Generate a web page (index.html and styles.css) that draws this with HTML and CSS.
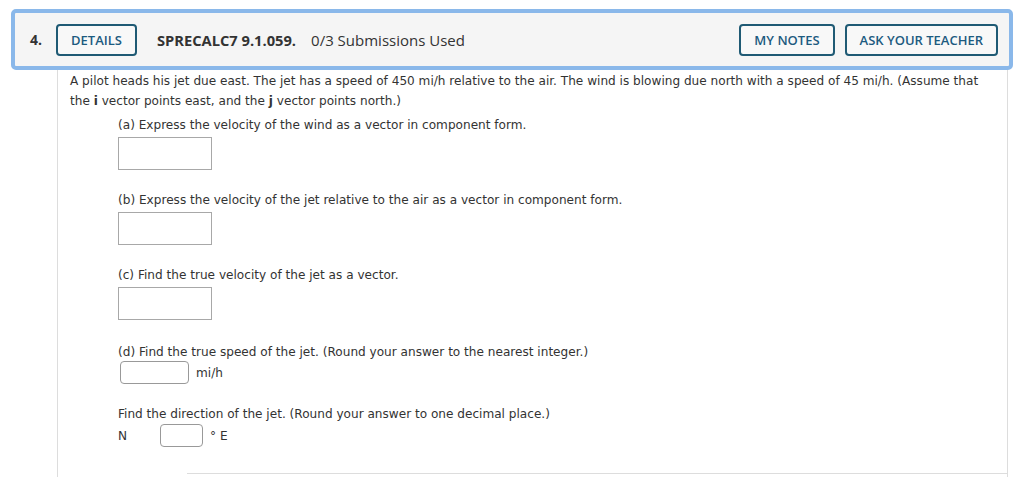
FILE: index.html
```html
<!DOCTYPE html>
<html>
<head>
<meta charset="utf-8">
<link rel="stylesheet" href="styles.css">
</head>
<body>
<div class="qhead">
  <span class="qnum">4.</span>
  <button class="btn">DETAILS</button>
  <span class="qref">SPRECALC7 9.1.059.</span>
  <span class="qsub">0/3 Submissions Used</span>
  <span class="spacer"></span>
  <button class="btn">MY NOTES</button>
  <button class="btn">ASK YOUR TEACHER</button>
</div>
<div class="qbody">
  <p class="intro">A pilot heads his jet due east. The jet has a speed of 450 mi/h relative to the air. The wind is blowing due north with a speed of 45 mi/h. (Assume that the <b>i</b> vector points east, and the <b>j</b> vector points north.)</p>
  <div class="parts">
    <div class="part first">
      <p class="ptext">(a) Express the velocity of the wind as a vector in component form.</p>
      <div class="bigbox"></div>
    </div>
    <div class="part">
      <p class="ptext">(b) Express the velocity of the jet relative to the air as a vector in component form.</p>
      <div class="bigbox"></div>
    </div>
    <div class="part">
      <p class="ptext">(c) Find the true velocity of the jet as a vector.</p>
      <div class="bigbox"></div>
    </div>
    <div class="part part-d">
      <p class="ptext">(d) Find the true speed of the jet. (Round your answer to the nearest integer.)</p>
      <div class="row row-d"><span class="small w69"></span><span class="unit">mi/h</span></div>
    </div>
    <div class="part">
      <p class="ptext">Find the direction of the jet. (Round your answer to one decimal place.)</p>
      <div class="row row-n"><span class="lbl">N</span><span class="small w43"></span><span class="unit">° E</span></div>
    </div>
  </div>
  <div class="bottomline"></div>
</div>
</body>
</html>
```
FILE: styles.css
```css
html, body { margin: 0; padding: 0; background: #fff; }
body { font-family: "DejaVu Sans", Verdana, sans-serif; color: #333; }

.qhead {
  margin: 9px 11px 0 11px;
  height: 53px;
  border: 4px solid #8ab8ea;
  border-radius: 5px;
  background: #f5f5f5;
  display: flex;
  align-items: center;
  padding: 0 11px 0 15px;
  font-family: "Open Sans", sans-serif;
  color: #333;
}
.qnum { font-weight: 700; font-size: 14px; margin-right: 14px; }
.btn {
  font-family: "Open Sans", sans-serif;
  font-weight: 600;
  font-size: 13px;
  color: #1d5b80;
  background: #f8f8f8;
  border: 2px solid #1f5a74;
  border-radius: 4px;
  height: 32px;
  padding: 0 13px;
  margin: 0;
}
.btn + .btn { margin-left: 10px; }
.qref { font-weight: 700; font-size: 14.7px; margin-left: 20px; }
.qsub { font-size: 15px; margin-left: 15px; }
.spacer { flex: 1; }

.qbody {
  margin-left: 57px;
  width: 951px;
  border-left: 1px solid #ddd;
  border-right: 1px solid #ddd;
  box-sizing: border-box;
  padding: 1px 22px 0 12px;
  font-size: 12.1px;
}
.intro { margin: 0; line-height: 20px; }
.parts { padding-left: 48px; }
.part { margin-top: 20px; }
.part.first { margin-top: 4px; }
.part.part-d { margin-top: 22px; }
.ptext { margin: 0; line-height: 20px; }
.bigbox {
  width: 94px; height: 33px;
  box-sizing: border-box;
  border: 1px solid #a8a8a8;
  background: #fff;
  margin-top: 2px;
}
.row { display: flex; align-items: center; }
.row-d { margin-top: -1px; }
.row-n { margin-top: 0; }
.small {
  display: inline-block;
  height: 23px;
  box-sizing: border-box;
  border: 1px solid #999;
  border-radius: 4px;
  background: #fff;
}
.w69 { width: 69px; margin-left: 2px; }
.w43 { width: 43px; }
.unit { margin-left: 7px; }
.lbl { margin-right: 33px; }
.bottomline { margin: 26px -22px 0 117px; border-top: 1px solid #ddd; height: 4px; }
```
